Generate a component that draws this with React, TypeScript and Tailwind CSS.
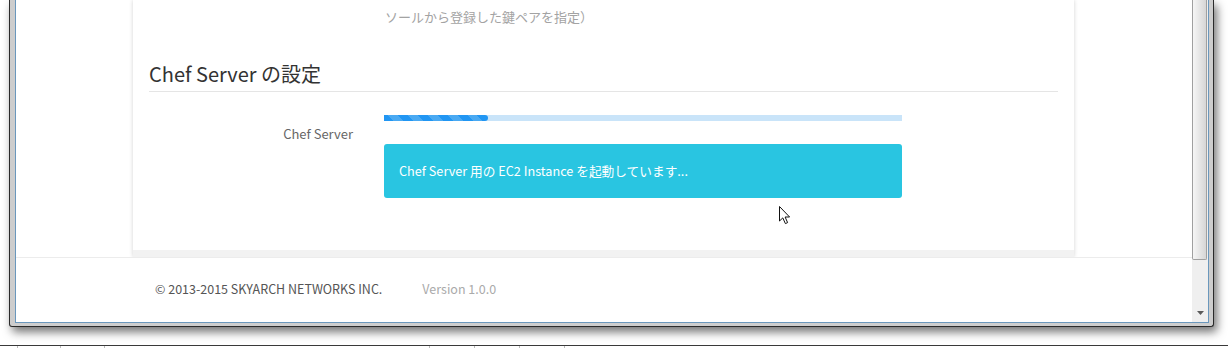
import React from 'react';

const progress = 20;

const Cursor: React.FC = () => (
  <svg
    className="absolute left-[778px] top-[205px]"
    width="14"
    height="20"
    viewBox="0 0 14 20"
    aria-hidden="true"
  >
    <path
      d="M1.5 1.5 L1.5 16 L4.8 12.9 L7.4 18.6 L9.6 17.6 L7.1 12 L11.6 12 Z"
      fill="#fff"
      stroke="#111"
      strokeWidth="1"
      strokeLinejoin="miter"
    />
  </svg>
);

const Scrollbar: React.FC = () => (
  <div className="flex w-[16px] flex-col bg-[#efefef]">
    <div className="h-[260px] w-[15px] rounded-b-[2px] border border-t-0 border-[#a0a0a0] bg-linear-to-r from-[#f6f6f6] to-[#d6d6d6]" />
    <div className="mt-auto mb-[7px] flex justify-center">
      <svg width="7" height="4" viewBox="0 0 7 4" aria-hidden="true">
        <path d="M0 0 L7 0 L3.5 4 Z" fill="#5a5a5a" />
      </svg>
    </div>
  </div>
);

export default function App() {
  return (
    <div className="relative h-[348px] w-[1228px] overflow-hidden bg-white font-['Noto_Sans_CJK_JP','Noto_Sans',sans-serif]">
      {/* browser window */}
      <div className="ml-[9px] h-[327px] w-[1205px] rounded-b-[3px] border-x border-b border-[#2a2a2a] bg-[#cdcdcd] pl-[5px] pr-[4px] pb-[3px] shadow-[3px_5px_10px_rgba(0,0,0,0.55)]">
        <div className="flex h-full border-x border-b border-[#6a97bc] bg-white">
          <div className="flex flex-1 flex-col">
            {/* main panel */}
            <div className="ml-[117px] flex h-[257px] w-[941px] flex-col bg-white shadow-[0_0_4px_rgba(0,0,0,0.18)]">
              <div className="flex-1 px-4">
                <p className="ml-[236px] pt-[8px] text-[13px] leading-[18px] text-[#a3a3a3]">
                  ソールから登録した鍵ペアを指定）
                </p>
                <h3 className="mt-[35px] border-b border-[#e5e5e5] pb-[4px] text-[20px] leading-[26px] text-[#333]">
                  Chef Server の設定
                </h3>
                <div className="mt-[23px] flex">
                  <label className="w-[204px] pt-[9px] text-right text-[13px] leading-[20px] text-[#666]">
                    Chef Server
                  </label>
                  <div className="ml-[31px] w-[518px]">
                    <div className="h-[6px] bg-[#c9e4f9]">
                      <div
                        className="h-full rounded-r-[3px] bg-[repeating-linear-gradient(45deg,#2196f3_0px,#2196f3_7px,#4aa9f2_7px,#4aa9f2_14px)]"
                        style={{ width: `${progress}%` }}
                      />
                    </div>
                    <div className="mt-[23px] flex h-[54px] items-center rounded-[3px] bg-[#29c5e1] px-[15px] text-[12.7px] text-white">
                      Chef Server 用の EC2 Instance を起動しています...
                    </div>
                  </div>
                </div>
              </div>
              <div className="h-[7px] bg-[#f2f2f2]" />
            </div>

            {/* footer */}
            <footer className="relative h-[65px] border-t border-[#ececec] bg-white">
              <div className="ml-[117px] flex h-full w-[941px] items-center gap-[40px] pb-[2px] pl-[22px] text-[12.5px]">
                <span className="text-[#555]">© 2013-2015 SKYARCH NETWORKS INC.</span>
                <span className="text-[#aaa]">Version 1.0.0</span>
              </div>
            </footer>
          </div>
          <Scrollbar />
        </div>
      </div>

      {/* edge of the window below */}
      <div className="mt-[18px] flex h-[3px] border-t border-[#3a3a3a]">
        <div className="ml-[17px] w-[44px] border-x border-[#bbb]" />
        <div className="ml-[1px] w-[43px] border-r border-[#bbb]" />
        <div className="ml-[324px] w-[46px] border-x border-[#bbb]" />
        <div className="ml-[1px] w-[44px] border-r border-[#bbb]" />
        <div className="ml-[1px] w-[44px] border-r border-[#bbb]" />
      </div>

      <Cursor />
    </div>
  );
}
